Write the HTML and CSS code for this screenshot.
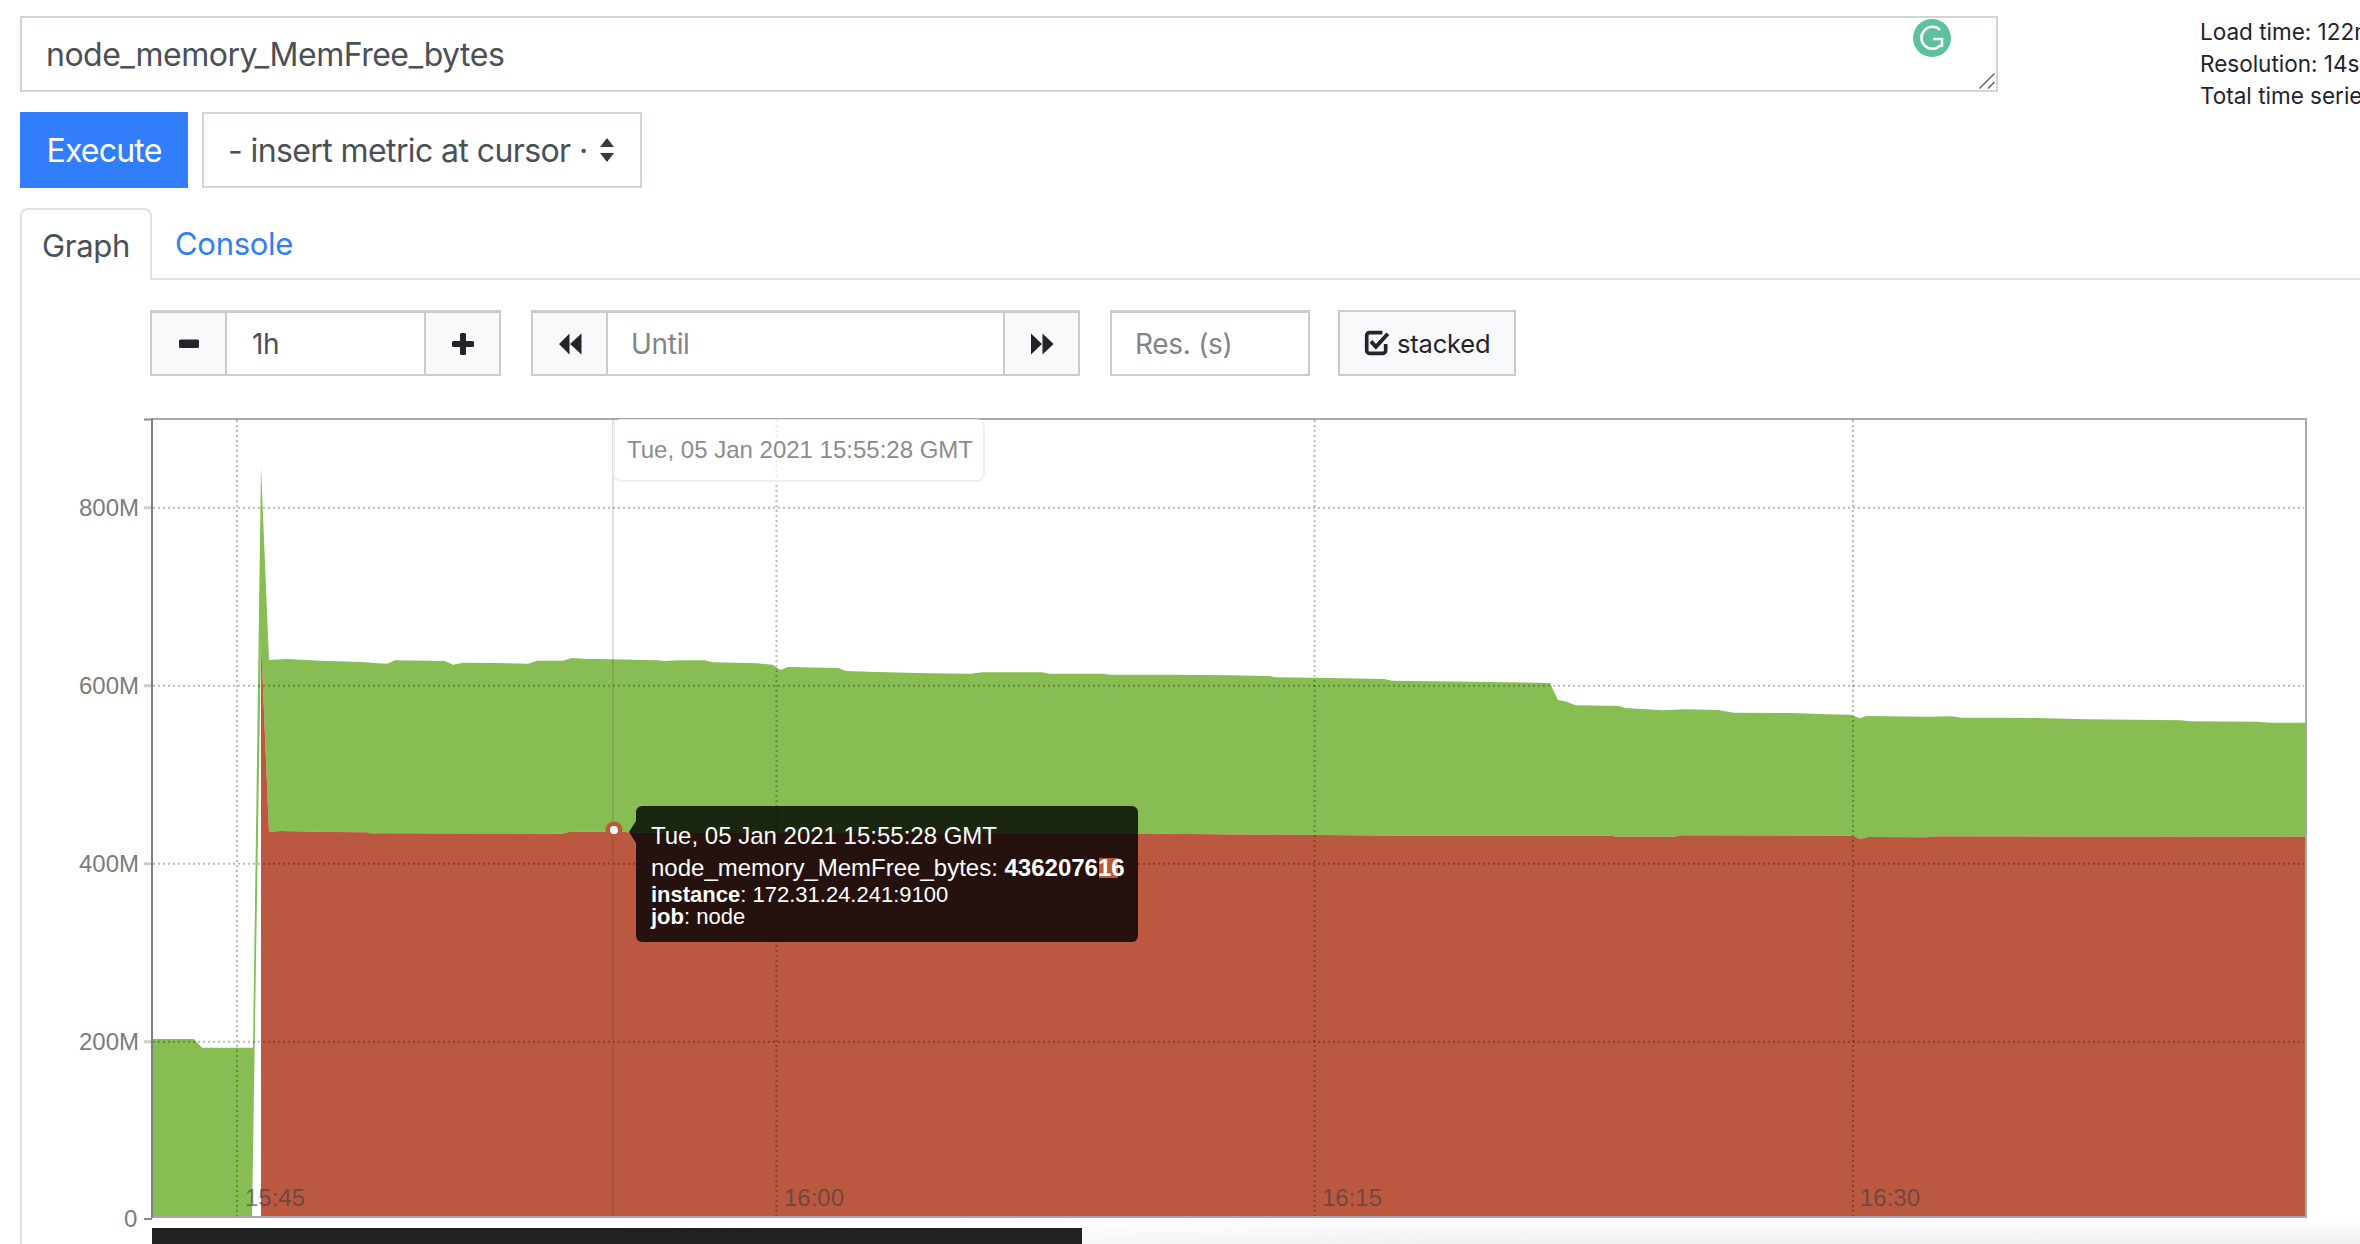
FILE: index.html
```html
<!DOCTYPE html>
<html lang="en">
<head>
<meta charset="utf-8">
<title>Prometheus Graph</title>
<link rel="stylesheet" href="styles.css">
</head>
<body>
<main class="app">
  <section class="query-row">
    <div class="query-box">
      <textarea class="query-input" rows="1" spellcheck="false">node_memory_MemFree_bytes</textarea>
      <svg class="grammarly" viewBox="0 0 38 38" aria-hidden="true">
        <circle cx="19" cy="19" r="19" fill="#5cc19c"/>
        <path d="M27 10.8A11 11 0 1 0 27.6 26.2M20 20H29V28" fill="none" stroke="#fff" stroke-width="2.5"/>
      </svg>
      <svg class="grip" viewBox="0 0 16 16" aria-hidden="true">
        <path d="M0.5 15.5L15.5 0.5M9 15.5L15.5 9" stroke="#5a5a5a" stroke-width="1.4" fill="none"/>
      </svg>
    </div>
    <div class="stats">
      <div>Load time: 122ms</div>
      <div>Resolution: 14s</div>
      <div>Total time series: 2</div>
    </div>
  </section>

  <section class="exec-row">
    <button class="execute">Execute</button>
    <div class="metric-select">
      <span>- insert metric at cursor ·</span>
      <svg class="updown" viewBox="0 0 16 24" aria-hidden="true"><path d="M8 0L15 9H1ZM8 24L1 15H15Z" fill="#343a40"/></svg>
    </div>
  </section>

  <nav class="tabs">
    <a class="tab tab-active">Graph</a>
    <a class="tab tab-link">Console</a>
  </nav>

  <section class="pane">
    <div class="controls">
      <div class="group range">
        <button class="btn-icon"><svg class="ico" viewBox="0 0 24 24"><rect x="2" y="7.5" width="20" height="8.5" rx="1.6"/></svg></button>
        <input class="field" value="1h">
        <button class="btn-icon"><svg class="ico" viewBox="0 0 24 24"><path d="M9 2.500a1.500 1.500 0 0 1 1.500-1.500h3A1.500 1.500 0 0 1 15 2.500V9h6.500A1.500 1.500 0 0 1 23 10.500v3a1.500 1.500 0 0 1-1.500 1.500H15v6.500a1.500 1.500 0 0 1-1.500 1.500h-3A1.500 1.500 0 0 1 9 21.500V15H2.500A1.500 1.500 0 0 1 1 13.500v-3A1.500 1.500 0 0 1 2.500 9H9Z"/></svg></button>
      </div>
      <div class="group until">
        <button class="btn-icon"><svg class="ico" viewBox="0 0 24 24"><path d="M11.500 1.500V22.500L1 12ZM23.500 1.500V22.500L12 12Z"/></svg></button>
        <input class="field" placeholder="Until">
        <button class="btn-icon"><svg class="ico" viewBox="0 0 24 24"><path d="M1 1.500V22.500L12 12ZM12.500 1.500V22.500L23.500 12Z"/></svg></button>
      </div>
      <input class="field res" placeholder="Res. (s)">
      <button class="stacked">
        <svg class="check" viewBox="0 0 24 24" aria-hidden="true">
          <path d="M20 13V19A2.500 2.500 0 0 1 17.500 21.500H5A2.500 2.500 0 0 1 2.500 19V5A2.500 2.500 0 0 1 5 2.500H17" fill="none" stroke="#212529" stroke-width="3.400"/>
          <path d="M6.500 10.500L11 15.500L22 3.500" fill="none" stroke="#212529" stroke-width="3.600"/>
        </svg>
        <span>stacked</span>
      </button>
    </div>

    <div class="graph">
      <svg class="plot" viewBox="22 410 2338 808" aria-hidden="false">
        <polygon class="s-green" points="152,1039 194,1039 202,1047.700 253,1047.700 261,467 269,660 287,659 320,660.700 363,662 377,663.300 387,663.700 395,660.300 445,661 453,664.700 463,662.700 493,663 528,663.700 537,660.700 563,660.700 572,658 587,659 600,659 657.500,660.300 665,661 678,660.300 704.600,660.300 712.400,662.300 757,663.300 772.600,664.700 780.400,670 788,667 838,668 845.800,671 877,672 929.500,673.300 971,673.700 982,672.300 1042,672.300 1050,673.700 1102,673.700 1110,674.700 1175,674.700 1227.600,675.300 1269.500,676 1274.700,677.300 1327,678 1384.500,679 1392,680.700 1473,681.700 1550,683 1558,700 1566.600,701.700 1575.700,705.300 1619,706 1625,708 1663,710.300 1685,709.300 1718,710 1734,712.700 1792,713 1825.600,714.300 1850,714.700 1860,718.300 1866.600,716 1926.600,716.700 1951,716.300 1962,717.700 2037,718 2086,719.300 2181,720.300 2190,721.300 2257,721.700 2269.600,722.700 2305,722.700 2305,836.700 1936,836.300 1926,837.300 1868,837 1860,839 1853,835.700 1680,835.300 1675,836.700 1617,836.700 1611,835.700 1400,835.700 1137,833.500 640,833 620,831.700 570,831.700 563,833.700 370,833.300 367,832.300 333,832 280,831 269,832 261,640 252,1217 152,1217"/>
        <polygon class="s-red" points="261,640 269,832 280,831 333,832 367,832.300 370,833.300 563,833.700 570,831.700 620,831.700 640,833 1137,833.500 1400,835.700 1611,835.700 1617,836.700 1675,836.700 1680,835.300 1853,835.700 1860,839 1868,837 1926,837.300 1936,836.300 2305,836.700 2305,1217 261,1217"/>

        <g class="grid">
          <path d="M153 507.700H2304M153 685.700H2304M153 863.700H2304M153 1041.700H2304"/>
          <path d="M237 420V1217M776.500 420V1217M1314.600 420V1217M1853 420V1217"/>
        </g>
        <path class="crosshair" d="M613 420V1217"/>

        <path class="tick-soft" d="M144 507.700H152M144 685.700H152M144 863.700H152M144 1041.700H152"/>
        <path class="tick-hard" d="M144 419.500H152"/>
        <path class="axis-soft" d="M152 419H2306V1217H152"/>
        <path class="axis-hard" d="M152 418.500V1218"/>

        <g class="y-labels">
          <text x="139" y="516">800M</text>
          <text x="139" y="694">600M</text>
          <text x="139" y="872">400M</text>
          <text x="139" y="1050">200M</text>
        </g>
        <g class="x-labels">
          <text x="245" y="1206">15:45</text>
          <text x="784" y="1206">16:00</text>
          <text x="1322" y="1206">16:15</text>
          <text x="1860" y="1206">16:30</text>
        </g>
        <circle class="marker-ring" cx="614" cy="830" r="8"/>
        <circle class="marker-core" cx="614" cy="830" r="4"/>
      </svg>

      <div class="hover-time">Tue, 05 Jan 2021 15:55:28 GMT</div>

      <div class="tooltip">
        <div class="tip-date">Tue, 05 Jan 2021 15:55:28 GMT</div>
        <div class="tip-value">node_memory_MemFree_bytes: <b>4362076<span class="tip-mark">16</span></b></div>
        <div class="tip-label"><b>instance</b>: 172.31.24.241:9100</div>
        <div class="tip-label"><b>job</b>: node</div>
      </div>
    </div>

    <div class="graph-foot">
      <span class="zero-label">0</span>
      <i class="zero-tick"></i>
      <div class="legend-bar"></div>
    </div>
  </section>
</main>
</body>
</html>
```
FILE: styles.css
```css
* { box-sizing: border-box; }
html, body { margin: 0; padding: 0; background: #fff; }
body {
  width: 2360px;
  height: 1244px;
  overflow: hidden;
  font-family: Inter, "Liberation Sans", sans-serif;
  color: #212529;
}
.app { padding: 16px 0 0 20px; width: 2360px; height: 1244px; overflow: hidden; }

/* query */
.query-row { display: flex; height: 76px; }
.query-box { position: relative; width: 1978px; height: 76px; flex: none; }
.query-input {
  display: block;
  width: 100%;
  height: 100%;
  resize: none;
  border: 2px solid #ced4da;
  outline: 0;
  padding: 19px 24px;
  font: 32px/36px Inter, sans-serif;
  letter-spacing: -0.5px;
  color: #495057;
  background: #fff;
  overflow: hidden;
}
.grammarly { position: absolute; left: 1893px; top: 3px; width: 38px; height: 38px; }
.grip { position: absolute; right: 3px; bottom: 3px; width: 16px; height: 16px; }
.stats { margin-left: 202px; flex: none; font-size: 22.5px; line-height: 32px; white-space: nowrap; }

/* execute */
.exec-row { display: flex; gap: 14px; margin-top: 20px; height: 76px; }
.execute {
  width: 168px;
  border: 0;
  background: #327dfa;
  color: #fff;
  font: 32px Inter, sans-serif;
  letter-spacing: -0.8px;
  padding: 0;
}
.metric-select {
  width: 440px;
  border: 2px solid #ced4da;
  display: flex;
  align-items: center;
  padding: 0 25px 0 24px;
  justify-content: space-between;
  font-size: 32px;
  letter-spacing: -0.6px;
  color: #495057;
  white-space: nowrap;
}
.updown { width: 16px; height: 24px; flex: none; }

/* tabs */
.tabs { display: flex; margin-top: 20px; height: 72px; border-bottom: 2px solid #dee2e6; }
.tab { font-size: 31px; letter-spacing: -0.3px; display: flex; align-items: center; }
.tab-active {
  width: 132px;
  height: 72px;
  padding-left: 20px;
  border: 2px solid #dee2e6;
  border-bottom: 0;
  border-radius: 8px 8px 0 0;
  background: #fff;
  color: #495057;
}
.tab-link { padding-left: 23px; color: #327dfa; }

/* pane */
.pane { border-left: 2px solid #dee2e6; height: 964px; padding-top: 30px; }
.controls { display: flex; height: 66px; padding-left: 128px; }
.group { display: flex; height: 66px; border: 2px solid #c9cbcd; border-top-width: 3px; }
.range { width: 351px; }
.until { width: 549px; margin-left: 30px; }
.btn-icon {
  width: 73px;
  flex: none;
  border: 0;
  background: #f8f9fa;
  padding: 0;
  display: flex;
  align-items: center;
  justify-content: center;
}
.ico { width: 24px; height: 24px; fill: #212529; }
.field {
  flex: 1;
  min-width: 0;
  height: 100%;
  border: 0;
  border-left: 2px solid #c9cbcd;
  border-right: 2px solid #c9cbcd;
  outline: 0;
  padding: 0 23px;
  font: 28px Inter, sans-serif;
  letter-spacing: -0.3px;
  color: #495057;
  background: #fff;
}
.range .field { padding-left: 25px; }
.field::placeholder { color: #808488; opacity: 1; }
.res {
  flex: none;
  width: 200px;
  height: 66px;
  margin-left: 30px;
  border: 2px solid #c9cbcd;
  border-top-width: 3px;
}
.stacked {
  margin-left: 28px;
  width: 178px;
  height: 66px;
  border: 2px solid #c9cbcd;
  background: #f8f9fa;
  display: flex;
  align-items: center;
  gap: 7px;
  padding: 0 0 0 24px;
  font: 25.5px Inter, sans-serif;
  letter-spacing: -0.2px;
  color: #212529;
}
.check { width: 26px; height: 26px; flex: none; }

/* graph */
.graph { position: relative; margin-top: 34px; height: 808px; }
.plot { display: block; width: 2338px; height: 808px; }
.s-green { fill: #87bd53; }
.s-red { fill: #bb5840; }
.grid path { fill: none; stroke: rgba(0, 0, 0, 0.27); stroke-width: 2; stroke-dasharray: 2 3; }
.crosshair { stroke: rgba(90, 60, 50, 0.16); stroke-width: 2; fill: none; }
.tick-soft { stroke: #ccc; stroke-width: 3; fill: none; }
.tick-hard { stroke: #888; stroke-width: 2; fill: none; }
.axis-soft { stroke: #a8a8a8; stroke-width: 2; fill: none; }
.axis-hard { stroke: #7f7f7f; stroke-width: 2; fill: none; }
.y-labels text { font: 24px "Liberation Sans", sans-serif; fill: #7c7c7c; text-anchor: end; }
.x-labels text { font: 24px "Liberation Sans", sans-serif; fill: rgba(60, 60, 60, 0.6); }
.marker-ring { fill: #bb5840; stroke: rgba(187, 88, 64, 0.45); stroke-width: 2; }
.marker-core { fill: #fff; }

.hover-time {
  position: absolute;
  left: 591px;
  top: 9px;
  width: 372px;
  height: 63px;
  padding-left: 12px;
  border: 2px solid #f0f0f0;
  border-top-color: transparent;
  border-radius: 8px;
  background: rgba(255, 255, 255, 0.72);
  color: #8c8c8c;
  font: 24px/58px "Liberation Sans", sans-serif;
  white-space: nowrap;
}
.tooltip {
  position: absolute;
  left: 614px;
  top: 396px;
  width: 502px;
  height: 136px;
  padding: 14px 15px;
  border-radius: 6px;
  background: rgba(0, 0, 0, 0.8);
  color: #fff;
  font-family: "Liberation Sans", sans-serif;
  white-space: nowrap;
}
.tooltip::before {
  content: "";
  position: absolute;
  left: -7px;
  top: 15px;
  border-style: solid;
  border-width: 11px 7px 11px 0;
  border-color: transparent rgba(0, 0, 0, 0.8) transparent transparent;
}
.tip-date, .tip-value { font-size: 24px; line-height: 32px; }
.tip-label { font-size: 22px; line-height: 22px; }
.tip-mark {
  display: inline-block;
  height: 20px;
  line-height: 20px;
  background: linear-gradient(#bb5840, #bb5840) 1px 0 / 19px 100% no-repeat;
}

/* below plot */
.graph-foot { position: relative; height: 26px; padding: 10px 0 0 130px; }
.graph-foot::before {
  content: "";
  position: absolute;
  inset: 0;
  background: linear-gradient(to bottom, rgba(240, 240, 240, 0), #f0f0f0);
  -webkit-mask-image: linear-gradient(to right, transparent 25%, #000 60%);
  mask-image: linear-gradient(to right, transparent 25%, #000 60%);
}
.zero-label {
  position: absolute;
  left: 102px;
  top: -13px;
  font: 24px/28px "Liberation Sans", sans-serif;
  color: #7c7c7c;
}
.zero-tick { position: absolute; left: 122px; top: 0; width: 8px; height: 2px; background: #888; }
.legend-bar { position: relative; width: 930px; height: 16px; background: #212121; }
```
